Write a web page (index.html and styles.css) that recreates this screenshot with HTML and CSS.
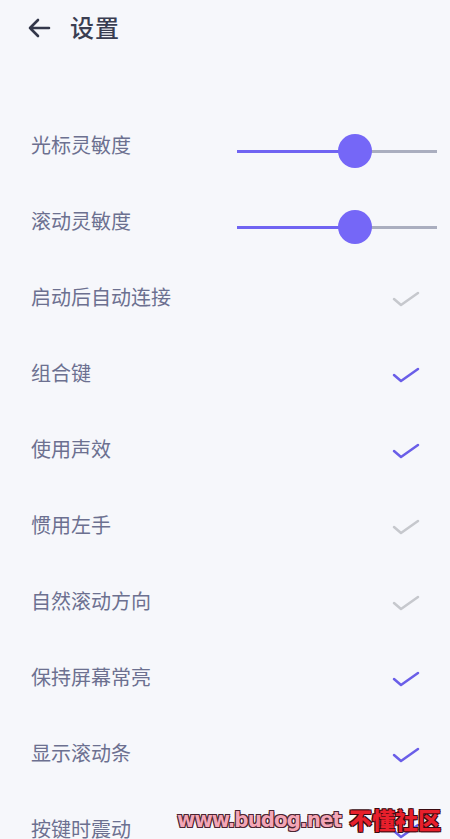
FILE: index.html
```html
<!DOCTYPE html>
<html>
<head>
<meta http-equiv="Content-Type" content="text/html; charset=utf-8"/>
<title>设置</title>
<link rel="stylesheet" href="styles.css">
</head>
<body>

<div class="header">
  <svg class="back" width="24" height="20" viewBox="0 0 24 20">
    <path d="M22 10 H3 M11 2 L3 10 L11 18" fill="none" stroke="#33374a" stroke-width="2.6" stroke-linecap="round" stroke-linejoin="round"/>
  </svg>
  <span class="title">设置</span>
</div>

<div class="list">
  <div class="row">
    <span class="label">光标灵敏度</span>
    <div class="slider">
      <div class="fill" style="width: 59%"></div>
      <div class="thumb"></div>
      <div class="rest"></div>
    </div>
  </div>
  <div class="row">
    <span class="label">滚动灵敏度</span>
    <div class="slider">
      <div class="fill" style="width: 59%"></div>
      <div class="thumb"></div>
      <div class="rest"></div>
    </div>
  </div>
  <div class="row">
    <span class="label">启动后自动连接</span>
    <svg class="check off" viewBox="0 0 28 16"><path d="M2 8 L9 14 L26 2"/></svg>
  </div>
  <div class="row">
    <span class="label">组合键</span>
    <svg class="check on" viewBox="0 0 28 16"><path d="M2 8 L9 14 L26 2"/></svg>
  </div>
  <div class="row">
    <span class="label">使用声效</span>
    <svg class="check on" viewBox="0 0 28 16"><path d="M2 8 L9 14 L26 2"/></svg>
  </div>
  <div class="row">
    <span class="label">惯用左手</span>
    <svg class="check off" viewBox="0 0 28 16"><path d="M2 8 L9 14 L26 2"/></svg>
  </div>
  <div class="row">
    <span class="label">自然滚动方向</span>
    <svg class="check off" viewBox="0 0 28 16"><path d="M2 8 L9 14 L26 2"/></svg>
  </div>
  <div class="row">
    <span class="label">保持屏幕常亮</span>
    <svg class="check on" viewBox="0 0 28 16"><path d="M2 8 L9 14 L26 2"/></svg>
  </div>
  <div class="row">
    <span class="label">显示滚动条</span>
    <svg class="check on" viewBox="0 0 28 16"><path d="M2 8 L9 14 L26 2"/></svg>
  </div>
  <div class="row">
    <span class="label">按键时震动</span>
    <svg class="check on" viewBox="0 0 28 16"><path d="M2 8 L9 14 L26 2"/></svg>
  </div>
</div>

<div class="watermark"><span class="site">www.budog.net</span><span class="cn">不懂社区</span></div>

</body>
</html>
```

FILE: styles.css
```css
html, body {
  margin: 0;
  padding: 0;
  background-color: #f6f7fb;
  font-family: "Noto Sans CJK SC", "Noto Sans", sans-serif;
}

body {
  width: 450px;
  height: 839px;
  overflow: hidden;
  position: relative;
}

.header {
  display: flex;
  align-items: center;
  height: 56px;
  padding-left: 27px;
}

.back {
  display: block;
}

.title {
  margin-left: 19px;
  margin-bottom: 4px;
  font-size: 24px;
  font-weight: 500;
  color: #3a3e52;
  letter-spacing: 1px;
}

.list {
  padding-top: 53px;
}

.row {
  display: flex;
  align-items: center;
  justify-content: space-between;
  height: 76px;
  padding: 0 13px 0 31px;
}

.label {
  margin-bottom: 5px;
  font-size: 20px;
  color: #6c7090;
}

.slider {
  display: flex;
  align-items: center;
  width: 200px;
  margin-top: 8px;
}

.fill {
  height: 3px;
  background-color: #7064f2;
  margin-right: -17px;
}

.thumb {
  width: 34px;
  height: 34px;
  border-radius: 50%;
  background-color: #7567f7;
  flex-shrink: 0;
  position: relative;
  z-index: 1;
}

.rest {
  flex: 1;
  height: 3px;
  background-color: #aaaebf;
  margin-left: -17px;
}

.check {
  width: 28px;
  height: 16px;
  margin-right: 17px;
}

.check path {
  fill: none;
  stroke-width: 2.5;
  stroke-linecap: round;
  stroke-linejoin: round;
}

.check.on path {
  stroke: #6a5ee8;
}

.check.off path {
  stroke: #c6c8cd;
}

.watermark {
  position: absolute;
  left: 177px;
  top: 802px;
  display: flex;
  align-items: center;
  white-space: nowrap;
}

.watermark .site {
  font-family: "DejaVu Sans Condensed", "DejaVu Sans", sans-serif;
  font-weight: bold;
  font-size: 22px;
  letter-spacing: -0.9px;
  color: #f3a6b6;
  text-shadow: -1px -1px 0 #4a2430, 1px -1px 0 #4a2430, -1px 1px 0 #4a2430, 1px 1px 0 #4a2430;
}

.watermark .cn {
  font-family: "Noto Sans CJK SC", sans-serif;
  font-weight: 900;
  font-size: 23px;
  color: #e8202c;
  margin-left: 8px;
  text-shadow: -1px -1px 0 #3a0a10, 1px -1px 0 #3a0a10, -1px 1px 0 #3a0a10, 1px 1px 0 #3a0a10;
}
```
